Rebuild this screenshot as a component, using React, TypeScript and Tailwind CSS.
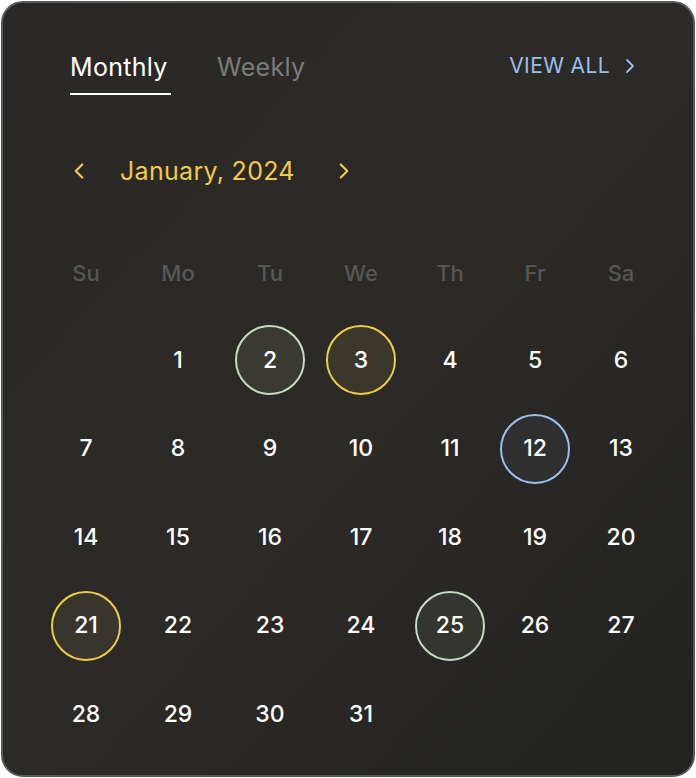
import { ChevronLeft, ChevronRight } from 'lucide-react';

const days = ['Su', 'Mo', 'Tu', 'We', 'Th', 'Fr', 'Sa'];

// marked days -> ring style
const marks: Record<number, string> = {
  2: 'border-[#c8dac4] bg-[#3a3a31]',
  3: 'border-[#f2cb45] bg-[#3b372b]',
  12: 'border-[#9ac0ec] bg-[#2f2f2f]',
  21: 'border-[#f2cb45] bg-[#38352c]',
  25: 'border-[#c8dac4] bg-[#33352e]',
};

const cols = 'grid grid-cols-[80px_104px_80px_102px_76px_94px_78px] pl-[43px]';

export default function App() {
  const cells: (number | null)[] = [null, ...Array.from({ length: 31 }, (_, i) => i + 1)];

  return (
    <div className="w-[696px] h-[778px] bg-white p-px" style={{ fontFamily: 'Inter, "Noto Sans", sans-serif' }}>
      <div className="w-full h-full rounded-[22px] border-2 border-[#5a5a5a] bg-gradient-to-br from-[#292826] via-[#2c2a26] to-[#222221] overflow-hidden">
        {/* header */}
        <div className="flex items-start justify-between pl-[67px] pr-[51px] pt-[47px]">
          <div className="flex gap-[46px]">
            <div className="flex flex-col">
              <span className="text-[25px] leading-[34px] tracking-[0.3px] text-white">Monthly</span>
              <div className="mt-[9px] h-[2px] w-[101px] bg-white"></div>
            </div>
            <span className="text-[25px] leading-[34px] tracking-[0.3px] text-[#7b7b7b]">Weekly</span>
          </div>
          <div className="flex items-center gap-[8px] pt-[1px] text-[#9ac0ec]">
            <span className="text-[21px] leading-[30px] tracking-[0.4px]">VIEW ALL</span>
            <ChevronRight size={24} strokeWidth={1.8} />
          </div>
        </div>

        {/* month nav */}
        <div className="mt-[59px] flex items-center pl-[63px] text-[#f2cb45]">
          <ChevronLeft size={26} strokeWidth={2} />
          <span className="ml-[28px] text-[25px] leading-[34px] tracking-[0.3px]">January, 2024</span>
          <ChevronRight size={26} strokeWidth={2} className="ml-[36px]" />
        </div>

        {/* calendar */}
        <div className={`mt-[65px] ${cols}`}>
          {days.map((d) => (
            <div key={d} className="h-[40px] flex items-center justify-center text-[22px] font-medium text-[#575655]">
              {d}
            </div>
          ))}
        </div>
        <div className={`mt-[32px] gap-y-[18.5px] ${cols}`}>
          {cells.map((n, i) => (
            <div key={i} className="flex h-[70px] items-center justify-center">
              {n !== null && (
                <div
                  className={`flex h-[70px] w-[70px] items-center justify-center rounded-full text-[23px] font-medium text-white ${
                    marks[n] ? `border-2 ${marks[n]}` : ''
                  }`}
                >
                  {n}
                </div>
              )}
            </div>
          ))}
        </div>
      </div>
    </div>
  );
}
